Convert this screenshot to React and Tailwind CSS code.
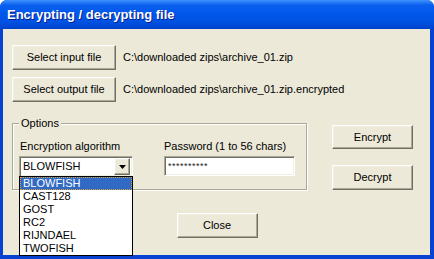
const raised =
  "border border-t-white border-l-white border-b-[#716F64] border-r-[#716F64] shadow-[inset_-1px_-1px_0_#ACA899,inset_1px_1px_0_#F1EFE2] bg-[#ECE9D8]";
const sunken =
  "border border-t-[#ACA899] border-l-[#ACA899] border-b-white border-r-white shadow-[inset_1px_1px_0_#716F64,inset_-1px_-1px_0_#F1EFE2] bg-white";

function Btn({ label, className }) {
  return (
    <button className={`${raised} flex items-center justify-center text-[11px] leading-none text-black ${className}`}>
      {label}
    </button>
  );
}

const algorithms = ["BLOWFISH", "CAST128", "GOST", "RC2", "RIJNDAEL", "TWOFISH"];

export default function App() {
  return (
    <div
      className="h-[259px] w-[434px] overflow-hidden bg-white"
      style={{ fontFamily: '"Liberation Sans", Arial, sans-serif' }}
    >
      <div className="flex h-full flex-col rounded-t-[7px] bg-[#0842D3]">
        {/* title bar */}
        <div className="flex h-[29px] shrink-0 items-center rounded-t-[7px] bg-[linear-gradient(to_bottom,#3d93ff_0px,#2a7ff7_2px,#0a5fef_5px,#0058ea_13px,#0053e4_21px,#0049d6_26px,#0041c9_29px)] pl-[7px]">
          <span className="text-[13px] font-bold text-white [text-shadow:1px_1px_0_#0a1c8c]">
            Encrypting / decrypting file
          </span>
        </div>

        {/* client */}
        <div className="mb-[4px] ml-[3px] mr-[4px] flex flex-1 flex-col bg-[#ECE9D8] pl-[9px] pt-[16px] text-[11px] text-black">
          <div className="flex h-[25px] items-center gap-[7px]">
            <Btn label="Select input file" className="h-[25px] w-[104px]" />
            <span>C:\downloaded zips\archive_01.zip</span>
          </div>
          <div className="mt-[7px] flex h-[25px] items-center gap-[7px]">
            <Btn label="Select output file" className="h-[25px] w-[104px]" />
            <span>C:\downloaded zips\archive_01.zip.encrypted</span>
          </div>

          <div className="mt-[21px] flex">
            {/* options group */}
            <div className="relative h-[67px] w-[295px] border border-[#ACA899] shadow-[inset_1px_1px_0_white,1px_1px_0_white]">
              <span className="absolute left-[6px] top-[-7px] bg-[#ECE9D8] px-[2px] leading-[13px]">Options</span>
              <div className="flex gap-[31px] pl-[6px] pt-[16px]">
                <div className="relative flex w-[114px] flex-col">
                  <span className="pl-px leading-[13px]">Encryption algorithm</span>
                  <div className={`${sunken} mt-[3px] flex h-[21px] items-center pl-[3px] pr-[2px]`}>
                    <span className="flex-1 leading-none">BLOWFISH</span>
                    <div className={`${raised} flex h-[17px] w-[16px] items-center justify-center`}>
                      <svg width="7" height="4" viewBox="0 0 7 4">
                        <path d="M0 0h7L3.5 4z" fill="black" />
                      </svg>
                    </div>
                  </div>
                  {/* open dropdown list */}
                  <div className="absolute left-0 top-[36px] z-10 w-[114px] border border-black bg-white">
                    {algorithms.map((a, i) => (
                      <div
                        key={a}
                        className={
                          i === 0
                            ? "h-[13px] border border-dotted border-[#D8A040] bg-[#316AC5] pl-[2px] leading-[11px] text-white"
                            : "h-[13px] pl-[3px] leading-[13px]"
                        }
                      >
                        {a}
                      </div>
                    ))}
                  </div>
                </div>
                <div className="flex w-[131px] flex-col">
                  <span className="leading-[13px]">Password (1 to 56 chars)</span>
                  <div className={`${sunken} mt-[3px] flex h-[20px] items-center pl-[3px]`}>
                    <span className="text-[9px] leading-none tracking-[0.5px] text-[#222]">**********</span>
                  </div>
                </div>
              </div>
            </div>

            <div className="ml-[25px] flex flex-col pt-[2px]">
              <Btn label="Encrypt" className="h-[24px] w-[81px]" />
              <Btn label="Decrypt" className="mt-[16px] h-[25px] w-[81px]" />
            </div>
          </div>

          <div className="mt-[23px] flex justify-center pr-[8px]">
            <Btn label="Close" className="h-[25px] w-[81px]" />
          </div>
        </div>
      </div>
    </div>
  );
}
